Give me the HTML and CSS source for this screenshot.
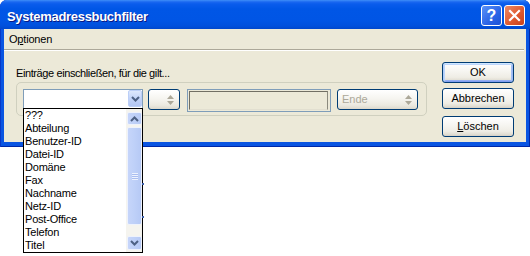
FILE: index.html
```html
<!DOCTYPE html>
<html>
<head>
<meta charset="utf-8">
<link rel="stylesheet" href="styles.css">
</head>
<body>
<div class="window">
  <div class="titlebar">
    <span class="title">Systemadressbuchfilter</span>
    <div class="tbtns">
      <span class="tbtn help">?</span>
      <span class="tbtn close"><svg width="13" height="13" viewBox="0 0 13 13"><path d="M2 2 L11 11 M11 2 L2 11" stroke="#fff" stroke-width="2.2" fill="none" stroke-linecap="square"/></svg></span>
    </div>
  </div>
  <div class="client">
    <div class="menubar"><span class="menuitem">O<u>p</u>tionen</span></div>
    <div class="sep"></div>
    <div class="content">
      <div class="left">
        <div class="label">Einträge einschließen, für die gilt...</div>
        <div class="group">
          <div class="combo">
            <span class="dropbtn"><svg width="9" height="6" viewBox="0 0 9 6"><path d="M1 1 L4.5 4.5 L8 1" stroke="#4d6185" stroke-width="2" fill="none"/></svg></span>
          </div>
          <div class="spin">
            <svg class="tri" width="7" height="10" viewBox="0 0 7 10"><path d="M3.5 0 L7 4 L0 4 Z M0 6 L7 6 L3.5 10 Z" fill="#aca899"/></svg>
          </div>
          <div class="field"><div class="field-inner"></div></div>
          <div class="ende">
            <span class="ende-text">Ende</span>
            <svg class="tri" width="7" height="10" viewBox="0 0 7 10"><path d="M3.5 0 L7 4 L0 4 Z M0 6 L7 6 L3.5 10 Z" fill="#aca899"/></svg>
          </div>
        </div>
      </div>
      <div class="buttons">
        <div class="btn default">OK</div>
        <div class="btn b2">Abbrechen</div>
        <div class="btn b3"><u>L</u>öschen</div>
      </div>
    </div>
  </div>
</div>
<div class="list">
  <div class="items">
    <div>???</div>
    <div>Abteilung</div>
    <div>Benutzer-ID</div>
    <div>Datei-ID</div>
    <div>Domäne</div>
    <div>Fax</div>
    <div>Nachname</div>
    <div>Netz-ID</div>
    <div>Post-Office</div>
    <div>Telefon</div>
    <div>Titel</div>
  </div>
  <div class="vscroll">
    <div class="sbtn up"><svg width="9" height="6" viewBox="0 0 9 6"><path d="M1 5 L4.5 1.5 L8 5" stroke="#4d6185" stroke-width="2" fill="none"/></svg></div>
    <div class="thumb"><span class="grip"></span></div>
    <div class="sbtn down"><svg width="9" height="6" viewBox="0 0 9 6"><path d="M1 1 L4.5 4.5 L8 1" stroke="#4d6185" stroke-width="2" fill="none"/></svg></div>
  </div>
</div>
<span class="mark m1"></span>
<span class="mark m2"></span>
</body>
</html>
```

FILE: styles.css
```css
body {
  margin: 0;
  background: #fff;
  font-family: "Liberation Sans", Arial, sans-serif;
  font-size: 11px;
  color: #000;
  position: relative;
  width: 530px;
  height: 256px;
  overflow: hidden;
}

.window {
  width: 530px;
  height: 147px;
  box-sizing: border-box;
  padding-bottom: 5px;
  background: #0a55e2;
  border-radius: 7px 7px 0 0;
  box-shadow: inset 1px 0 #0838c8, inset -1px 0 #0028a8, inset 0 -1px #0028a8;
  display: flex;
  flex-direction: column;
}

.titlebar {
  height: 29px;
  flex: none;
  display: flex;
  align-items: flex-start;
  border-radius: 7px 7px 0 0;
  background: linear-gradient(to bottom, #3f8ef8 0px, #1a67f0 2px, #0a5cec 4px, #0056e6 9px, #0055e5 20px, #0050dc 26px, #0047cc 29px);
}

.title {
  color: #fff;
  font-weight: bold;
  font-size: 13px;
  line-height: 16px;
  letter-spacing: -0.3px;
  margin: 9px 0 0 7px;
  text-shadow: 1px 1px #0a1883;
}

.tbtns {
  margin: 5px 5px 0 auto;
  display: flex;
  gap: 2px;
}

.tbtn {
  width: 21px;
  height: 21px;
  box-sizing: border-box;
  border: 1px solid #fff;
  border-radius: 3px;
  display: flex;
  align-items: center;
  justify-content: center;
}

.help {
  background: linear-gradient(135deg, #5b93f8, #2a63e6 60%, #1c52d6);
  color: #fff;
  font-weight: bold;
  font-size: 16px;
  line-height: 19px;
}

.close {
  background: linear-gradient(135deg, #ec8a66, #e05a30 55%, #c8401c);
}

.client {
  margin: 0 4px;
  height: 113px;
  background: #ece9d8;
  display: flex;
  flex-direction: column;
}

.menubar {
  height: 20px;
  line-height: 20px;
  padding-left: 5px;
  flex: none;
  letter-spacing: -0.2px;
}

.sep {
  height: 0;
  border-top: 1px solid #aca899;
  border-bottom: 1px solid #fff;
  margin-right: 2px;
  flex: none;
}

.content {
  display: flex;
  padding: 0 12px;
  flex: 1;
}

.left {
  padding-top: 16px;
}

.label {
  line-height: 13px;
  height: 13px;
  letter-spacing: -0.4px;
}

.group {
  margin-top: 2px;
  width: 411px;
  height: 34px;
  box-sizing: border-box;
  border: 1px solid #d0d0bf;
  border-radius: 5px;
  padding: 6px 0 0 6px;
  display: flex;
  align-items: flex-start;
}

.combo {
  width: 120px;
  height: 21px;
  box-sizing: border-box;
  border: 1px solid #7f9db9;
  background: #fff;
  display: flex;
  justify-content: flex-end;
}

.dropbtn {
  width: 14px;
  height: 17px;
  box-sizing: border-box;
  border: 1px solid #bccff7;
  border-radius: 2px;
  background: linear-gradient(to bottom, #dde8fd, #c3d4f9 50%, #b2c6f4);
  display: flex;
  align-items: center;
  justify-content: center;
}

.spin, .ende {
  height: 21px;
  box-sizing: border-box;
  border: 1px solid #003c74;
  border-radius: 3px;
  background: linear-gradient(to bottom, #fff, #f6f5f0 45%, #ebe9e0 80%, #dcd8cc);
  display: flex;
  align-items: center;
}

.spin {
  width: 32px;
  margin-left: 5px;
  justify-content: flex-end;
  padding-right: 5px;
}

.field {
  width: 144px;
  height: 23px;
  margin-left: 7px;
  box-sizing: border-box;
  border: 1px solid #7f9db9;
  padding: 1px 2px 1px 1px;
}

.field-inner {
  height: 100%;
  box-sizing: border-box;
  border-top: 1px solid #716f64;
  border-left: 1px solid #716f64;
  border-right: 1px solid #8c8a7e;
  border-bottom: 1px solid #e2dfd0;
}

.ende {
  width: 81px;
  margin-left: 6px;
  padding: 0 5px 0 4px;
  justify-content: space-between;
}

.ende-text {
  color: #aca899;
  line-height: 19px;
}

.buttons {
  margin-left: auto;
  display: flex;
  flex-direction: column;
}

.btn {
  width: 72px;
  height: 21px;
  box-sizing: border-box;
  border: 1px solid #003c74;
  border-radius: 3px;
  background: linear-gradient(to bottom, #fff, #f7f6f2 40%, #efede5 75%, #e0ddd2 92%, #d6d0c5);
  text-align: center;
  line-height: 19px;
}

.default {
  margin-top: 11px;
  box-shadow: inset 0 1px #cee7ff, inset 1px 0 #b0cdf8, inset -1px 0 #9db9f2, inset 0 -1px #7f9ef0, inset 0 2px #bcd5fc, inset 2px 0 #bcd5fc, inset -2px 0 #a5c0f4, inset 0 -2px #93aef2;
}

.b2 {
  margin-top: 5px;
}

.b3 {
  margin-top: 7px;
}

.list {
  position: absolute;
  left: 23px;
  top: 108px;
  width: 120px;
  height: 145px;
  box-sizing: border-box;
  border: 1px solid #000;
  background: #fff;
  display: flex;
}

.items {
  flex: 1;
  padding-left: 1px;
  line-height: 13px;
  letter-spacing: -0.2px;
}

.vscroll {
  width: 16px;
  box-sizing: border-box;
  padding: 3px 0 2px 1px;
  background: #f5f4ef;
  display: flex;
  flex-direction: column;
}

.sbtn, .thumb {
  box-sizing: border-box;
  border: 1px solid #eef2fc;
  border-radius: 2px;
  background: linear-gradient(to right, #c6d5fa, #bed0f8 50%, #b6c9f5);
  display: flex;
  align-items: center;
  justify-content: center;
}

.sbtn.up {
  height: 13px;
}

.thumb {
  margin-top: 2px;
  height: 98px;
}

.grip {
  width: 6px;
  height: 7px;
  background: repeating-linear-gradient(to bottom, #eef3fe 0, #eef3fe 1px, #a9bdf0 1px, #a9bdf0 2px);
}

.sbtn.down {
  margin-top: 11px;
  height: 14px;
}

.mark {
  position: absolute;
  left: 142px;
  width: 2px;
  height: 2px;
  background: #3c5ea8;
}

.m1 { top: 183px; }
.m2 { top: 216px; }
```
